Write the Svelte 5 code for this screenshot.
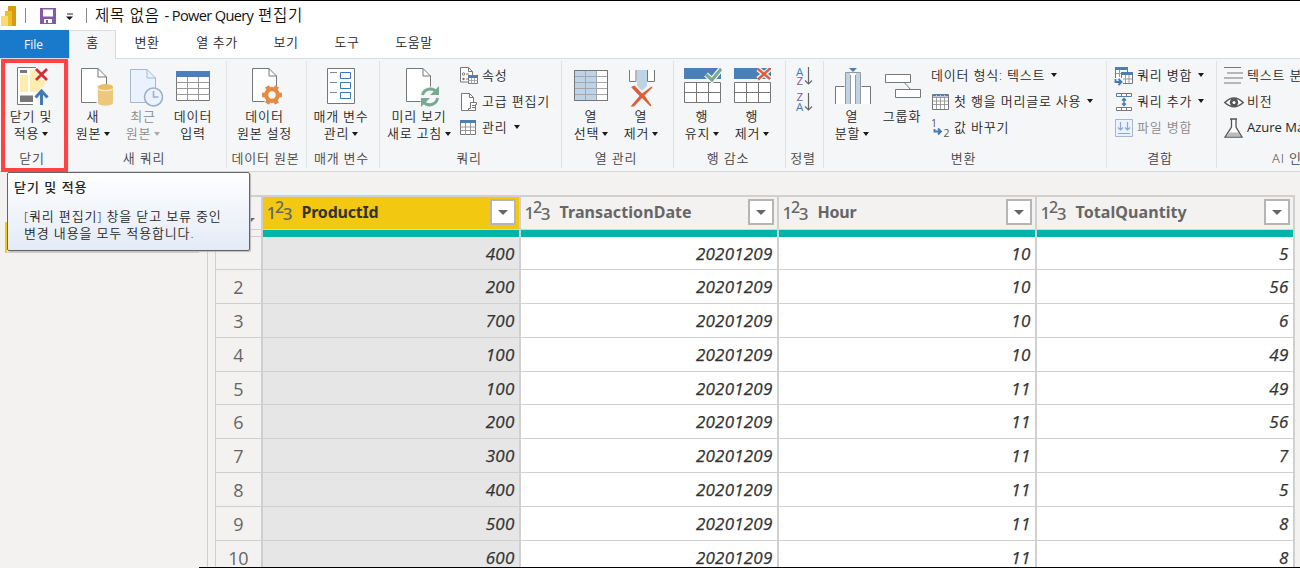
<script>
  const big = {
    apply: `<path d="M11.500 1.500H31V39H11.500Z" fill="#fff"/><path d="M30 1.500H11.500V38.500H27" fill="none" stroke="#777"/><path d="M14 9h8v17h-8zM24 4h8v7l-3 3h10v4l-8 8h-7z" fill="#ffedb0"/><path d="M14 4h7v3h-7zM14 29.500h13v6.500h-13z" fill="#777"/><path d="M30 3l11 11M41 3L30 14" stroke="#cf2f35" stroke-width="2.800"/><path d="M35.500 39V25M29.500 31.500l6-6.500 6 6.500" fill="none" stroke="#437ab5" stroke-width="3"/>`,
    source: `<path d="M13.500 2.500H30L38.500 11V36.500H13.500Z" fill="#fff" stroke="#777"/><path d="M30 2.500V11H38.500" fill="none" stroke="#777"/><path d="M28.500 19h18v22h-18z" fill="#f5f6f7"/><path d="M30 21v15.500c0 4.200 15 4.200 15 0V21" fill="#edc77c"/><ellipse cx="37.500" cy="20.800" rx="7.500" ry="2.800" fill="#e9bc69"/><path d="M30 22.500c1 3 14 3 15 0" fill="none" stroke="#fff" stroke-width=".8"/>`,
    recent: `<path d="M12.500 3.500H29L37.500 12V36.500H12.500Z" fill="#eaf2fd" stroke="#a9b6cf"/><path d="M29 3.500V12H37.500" fill="none" stroke="#a9b6cf"/><circle cx="35.500" cy="31" r="9" fill="#eaf2fd" stroke="#9dafcc" stroke-width="1.600"/><path d="M35.500 25v6h5" fill="none" stroke="#9dafcc" stroke-width="1.600"/>`,
    table: `<path d="M8.500 5.500h33v29h-33z" fill="#fff" stroke="#777"/><path d="M8 5h34v6H8z" fill="#4a7fb8"/><path d="M8.500 16.500h33M8.500 22.500h33M8.500 28.500h33M19.500 11v24M30.500 11v24" stroke="#999"/>`,
    settings: `<path d="M12.500 2.500H29L36.500 10V35.500H12.500Z" fill="#fff" stroke="#777"/><path d="M29 2.500V10H36.500" fill="none" stroke="#777"/><circle cx="32" cy="29" r="10" fill="#f5f6f7"/><circle cx="32" cy="29" r="5.800" fill="none" stroke="#e58a43" stroke-width="4.200"/><path d="M22 29h4M38 29h4M27 20.300l2 3.500M37 20.300l-2 3.500M27 37.700l2-3.500M37 37.700l-2-3.500" stroke="#e58a43" stroke-width="4.500"/>`,
    params: `<path d="M11.500 2.500h27v35h-27z" fill="#fff" stroke="#777"/><path d="M14 6.500h7M14 16.500h7M14 26.500h7" stroke="#888"/><path d="M24.500 6.500h10v6h-10zM24.500 16.500h10v6h-10zM24.500 26.500h10v6h-10z" fill="#fff" stroke="#3c78b7"/>`,
    refresh: `<path d="M12.500 2.500H29L36.500 10V35.500H12.500Z" fill="#fff" stroke="#777"/><path d="M29 2.500V10H36.500" fill="none" stroke="#777"/><circle cx="36" cy="31" r="10.500" fill="#f5f6f7"/><path d="M28.500 29a8 8 0 0 1 14-3M43.500 32a8 8 0 0 1-14 4" fill="none" stroke="#78aa91" stroke-width="3"/><path d="M45 20v9h-9zM27 41v-9h9z" fill="#78aa91"/>`,
    choose: `<path d="M8.500 4.500h33v30h-33z" fill="#fff" stroke="#777"/><path d="M9 5h22v29H9z" fill="#bfd3e8"/><path d="M9 10.500h32M9 16.500h32M9 22.500h32M9 28.500h32M19.500 5v29M30.500 5v29" stroke="#a3a7ac"/><path d="M8.500 4.500h33v30h-33z" fill="none" stroke="#777"/>`,
    remove: `<path d="M13.500 4v11.500h6.500V4M31.500 4v11.500h7V4" fill="#fff" stroke="#777"/><path d="M21 4h10v16l-5 5-5-5z" fill="#bfd3e8"/><path d="M15 21l3.500-1.500 7.500 8 9.500-7 1 1-8 8 7 10-1 1-8.500-8.500-8 8.500h-3.500l9-10.500z" fill="#d9603f"/>`,
    keep: `<path d="M7 2h37v11H7z" fill="#4a7fb8"/><path d="M7.500 16.500h36v20h-36z" fill="#fff" stroke="#777"/><path d="M7 26.500h37M19.500 17v20M31.500 17v20" stroke="#777"/><path d="M29 8.500l6 5.500 9-11" fill="none" stroke="#f5f6f7" stroke-width="5.500"/><path d="M29 8.500l6 5.500 9-11" fill="none" stroke="#78aa91" stroke-width="3.200"/>`,
    drop: `<path d="M7 2h37v11H7z" fill="#4a7fb8"/><path d="M7.500 16.500h36v20h-36z" fill="#fff" stroke="#777"/><path d="M7 26.500h37M19.500 17v20M31.500 17v20" stroke="#777"/><path d="M31 3l12 10M43 3L31 13" stroke="#f5f6f7" stroke-width="5"/><path d="M31 3l12 10M43 2.500L31 13.500" stroke="#d9603f" stroke-width="2.400"/>`,
    split: `<path d="M8.500 38V20.500h9M43.500 38V20.500h-9" fill="#fff" stroke="#777"/><path d="M9 21h9v17H9zM34 21h9v17h-9z" fill="#fff"/><path d="M18.500 38V6.500h15V38" fill="#fff" stroke="#999"/><path d="M19 7h4v31h-4zM29 7h4v31h-4z" fill="#bfd3e8"/><path d="M23.500 38V9M28.500 38V9" stroke="#999"/><path d="M20 0h12v6H20z" fill="#f5f6f7"/><path d="M22 2h8l-4 4z" fill="#4a7fb8"/>`,
    group: `<path d="M26 15l8 9" stroke="#777"/><path d="M8.500 8.500h25v8h-25zM18.500 23.500h25v8h-25z" fill="#fff" stroke="#777"/>`,
  };
  const small = {
    props: `<path d="M1.500 1.500h8l4 4V16h-12z" fill="#fff" stroke="#777"/><path d="M9.500 1.500v4h4" fill="none" stroke="#777"/><circle cx="4.500" cy="8" r="1.200" fill="none" stroke="#777"/><circle cx="4.500" cy="13" r="1.200" fill="#777"/><path d="M7 8h3M7 13h3" stroke="#777"/><path d="M9.500 9.500h9v8h-9z" fill="#fff" stroke="#777"/><path d="M9 9h10v3H9z" fill="#4a7fb8"/><path d="M9 14.500h10M12.500 12v6M15.500 12v6" stroke="#999" stroke-width=".8"/>`,
    editor: `<path d="M2.500 1.500h8l4 4v13h-12z" fill="#fff" stroke="#777"/><path d="M10.500 1.500v4h4" fill="none" stroke="#777"/><path d="M10 10h9v9h-9z" fill="#f5f6f7"/><path d="M11.500 10.500h6v2h-1v6h-7v-2h2z" fill="#fff" stroke="#777"/><path d="M13 13.500h3M13 15.500h3" stroke="#777"/>`,
    manage: `<path d="M1.500 2.500h15v14h-15z" fill="#fff" stroke="#777"/><path d="M1 2h16v3H1z" fill="#4a7fb8"/><path d="M1.500 9h15M1.500 12.500h15M6.500 5v12M11.500 5v12" stroke="#999"/>`,
    header: `<path d="M1.500 2.500h16v15h-16z" fill="#fff" stroke="#777"/><path d="M2 3h15v2H2z" fill="#b9cfe6"/><path d="M2 2h3v2H2zM6 2h3v2H6zM10 2h3v2h-3zM14 2h3v2h-3z" fill="#4a7fb8"/><path d="M1.500 5.500h16M1.500 9h16M1.500 12.500h16M5.500 5v12M9.500 5v12M13.500 5v12" stroke="#888" stroke-width=".8"/>`,
    replace: `<text x="0" y="9" font-family="Open Sans" font-size="10.500" fill="#555">1</text><text x="12.500" y="19" font-family="Open Sans" font-size="10.500" fill="#555">2</text><path d="M3.500 11v2.500h6M7 10.500l3 3-3 3" fill="none" stroke="#437ab5" stroke-width="1.800"/>`,
    merge: `<path d="M1.500 2.500h12v11h-12z" fill="#fff" stroke="#777"/><path d="M1 1h13v3H1z" fill="#4a7fb8"/><path d="M2 7.500h8M5.500 4v7" stroke="#999"/><path d="M7.500 7.500h11v10h-11z" fill="#fff" stroke="#777"/><path d="M7 6h12v3H7z" fill="#4a7fb8"/><path d="M8 13h10M11.500 9v8M15 9v8" stroke="#999"/><path d="M0 12h9v8H0z" fill="#f5f6f7"/><path d="M1.500 13v3h5M4.500 13l3 3-3 3" fill="none" stroke="#437ab5" stroke-width="1.800"/>`,
    append: `<path d="M2.500 1.500h15v3h-15z" fill="#fff" stroke="#4a7fb8"/><path d="M2.500 15.500h15v3h-15z" fill="#fff" stroke="#777"/><path d="M7.500 1v4M12.500 1v4M7.500 15v4M12.500 15v4" stroke="#777"/><path d="M10 8v4M8 8.500l2-2 2 2M8 11.500l2 2 2-2" fill="none" stroke="#437ab5" stroke-width="1.500"/>`,
    combine: `<path d="M1.500 1.500h17v17h-17z" fill="#eaf2fd" stroke="#a9b6cf"/><path d="M6.500 4v8M4 9.500l2.500 2.500 2.500-2.500M13.500 4v8M11 9.500l2.500 2.500 2.500-2.500M4 15.500h12" fill="none" stroke="#8ea6cb" stroke-width="1.200"/>`,
    text: `<path d="M0 1.500h17M3 7h16M0 12h19M0 17h17" stroke="#777" stroke-width="1.200"/>`,
    vision: `<path d="M.8 10.500Q10 1.500 19.200 10.500Q10 19 .8 10.500Z" fill="#fff" stroke="#555" stroke-width="1.500"/><circle cx="10" cy="10.500" r="4.200" fill="#555"/><circle cx="10" cy="10.500" r="1.500" fill="#fff"/>`,
    azure: `<path d="M6 1h7M7.500 1v8L1 19.200h17L12 9V1" fill="#fff" stroke="#555" stroke-width="1.300"/><path d="M5 14.500h9.500l2 3.500H3z" fill="#bbb"/>`,
  };
  const tabs = [
    ['변환', 62], ['열 추가', 78], ['보기', 60], ['도구', 62], ['도움말', 72],
  ];
  const groups = [
    { w: 68, label: '닫기', lw: 64, items: [{ i: 'apply', w: 62, a: '닫기 및', b: '적용', c: 1 }] },
    { w: 158, label: '새 쿼리', lw: 152, items: [{ i: 'source', w: 50, a: '새', b: '원본', c: 1 }, { i: 'recent', w: 50, a: '최근', b: '원본', c: 1, off: 1 }, { i: 'table', w: 50, a: '데이터', b: '입력' }] },
    { w: 80, label: '데이터 원본', lw: 79, items: [{ i: 'settings', w: 77, a: '데이터', b: '원본 설정' }] },
    { w: 73, label: '매개 변수', lw: 71, items: [{ i: 'params', w: 70, a: '매개 변수', b: '관리', c: 1 }] },
    { w: 182, label: '쿼리', lw: 180, items: [{ i: 'refresh', w: 80, a: '미리 보기', b: '새로 고침', c: 1 }], list: [['props', '속성'], ['editor', '고급 편집기'], ['manage', '관리', 1]] },
    { w: 112, label: '열 관리', lw: 110, pad: 5, items: [{ i: 'choose', w: 50, a: '열', b: '선택', c: 1 }, { i: 'remove', w: 50, a: '열', b: '제거', c: 1 }] },
    { w: 112, label: '행 감소', lw: 110, pad: 4, items: [{ i: 'keep', w: 50, a: '행', b: '유지', c: 1 }, { i: 'drop', w: 50, a: '행', b: '제거', c: 1 }] },
    { w: 38, label: '정렬', lw: 36, items: [], sort: true },
    { w: 283, label: '변환', lw: 281, pad: 4, items: [{ i: 'split', w: 50, a: '열', b: '분할', c: 1 }, { i: 'group', w: 50, a: '그룹화', b: '' }], lpad: 4, list: [['', '데이터 형식: 텍스트', 1], ['header', '첫 행을 머리글로 사용', 1], ['replace', '값 바꾸기']] },
    { w: 110, label: '결합', lw: 108, pad: 8, items: [], list: [['merge', '쿼리 병합', 1], ['append', '쿼리 추가', 1], ['combine', '파일 병합', 0, 1]] },
    { w: 170, label: 'AI 인사이트', lw: 180, pad: 8, items: [], list: [['text', '텍스트 분석'], ['vision', '비전'], ['azure', 'Azure Machine Learning']] },
  ];
  const columns = ['ProductId', 'TransactionDate', 'Hour', 'TotalQuantity'];
  const rows = [
    ['', 400, 20201209, 10, 5], [2, 200, 20201209, 10, 56], [3, 700, 20201209, 10, 6],
    [4, 100, 20201209, 10, 49], [5, 100, 20201209, 11, 49], [6, 200, 20201209, 11, 56],
    [7, 300, 20201209, 11, 7], [8, 400, 20201209, 11, 5], [9, 500, 20201209, 11, 8],
    [10, 600, 20201209, 11, 8],
  ];
</script>

<div class="app">
  <header class="title">
    <svg class="logo" width="18" height="22" viewBox="0 0 18 22"><path d="M8 1h8v20H8z" fill="#d99a10"/><path d="M5 6h7v15H5z" fill="#efbd2a"/><path d="M1 11h7v10H1z" fill="#f8dc72"/></svg>
    <i class="bar"></i>
    <svg class="save" width="17" height="17" viewBox="0 0 17 17"><path d="M0 0h16v16H0z" fill="#8559a8"/><path d="M3 1.500h10v7H3zM4 11h8v4H4z" fill="#fff"/><path d="M6 12h2v3H6z" fill="#8559a8"/></svg>
    <svg class="qat" width="8" height="8" viewBox="0 0 8 8"><path d="M1 1h6" stroke="#222"/><path d="M0 3.500h7l-3.500 3.500z" fill="#111"/></svg>
    <i class="bar"></i>
    <span class="name">제목 없음 <em>- Power Query</em> 편집기</span>
  </header>
  <nav>
    <b class="file">File</b><b class="home">홈</b>
    {#each tabs as [t, w]}<b style="width:{w}px">{t}</b>{/each}
  </nav>
  <section class="ribbon">
    {#each groups as g}
      <div class="group" style="width:{g.w}px">
        <div class="content" style="padding-left:{g.pad ?? 0}px">
          {#each g.items as it}
            <div class="big" class:off={it.off} style="width:{it.w}px">
              <svg width="50" height="42" viewBox="0 0 50 42">{@html big[it.i]}</svg>
              <span>{it.a}</span>
              <span>{it.b}{#if it.c}<i class="caret"></i>{/if}</span>
            </div>
          {/each}
          {#if g.sort}
            <svg class="sort" width="20" height="50" viewBox="0 0 20 50" font-family="Open Sans" font-size="11.500" font-weight="400">
              <text x="1" y="9.500" fill="#437ab5">A</text><text x="1.500" y="19" fill="#8559a8">Z</text>
              <text x="1.500" y="35" fill="#8559a8">Z</text><text x="1" y="45" fill="#437ab5">A</text>
              <path d="M13.500 1v17M10 14.500l3.500 3.500 3.500-3.500M13.500 27v17M10 40.500l3.500 3.500 3.500-3.500" fill="none" stroke="#666" stroke-width="1.200"/>
            </svg>
          {/if}
          {#if g.list}
            <div class="list" style="padding-left:{g.lpad ?? 0}px">
              {#each g.list as [icon, text, caret, off]}
                <div class="line" class:off class:latin={icon === 'azure'}>
                  {#if icon}<svg width="20" height="20" viewBox="0 0 20 20">{@html small[icon]}</svg>{/if}
                  <span>{text}</span>{#if caret}<i class="caret"></i>{/if}
                </div>
              {/each}
            </div>
          {/if}
        </div>
        <div class="label" style="width:{g.lw}px">{g.label}</div>
      </div>
    {/each}
  </section>
  <main>
    <aside><div class="query"></div></aside>
    <div class="grid">
      <div class="row head">
        <div class="num"><i class="caret"></i></div>
        {#each columns as c, n}
          <div class="th" class:sel={n === 0}>
            <span class="type">1<sup>2</sup><sub>3</sub></span><strong class:wide={n % 2}>{c}</strong><span class="drop"><i></i></span>
          </div>
        {/each}
      </div>
      <div class="row teal"><div class="num"></div>{#each columns as c}<div class="quality"></div>{/each}</div>
      {#each rows as r}
        <div class="row">
          <div class="num">{r[0]}</div>
          {#each r.slice(1) as v, n}<div class="td" class:sel={n === 0}>{v}</div>{/each}
        </div>
      {/each}
    </div>
  </main>
  <div class="mark"></div>
  <div class="tip"><h4>닫기 및 적용</h4><p>[쿼리 편집기] 창을 닫고 보류 중인<br>변경 내용을 모두 적용합니다.</p></div>
  <div class="edge"></div>
</div>

<style>
  .app { position: relative; width: 1300px; height: 568px; overflow: hidden; background: #f3f2f1; display: flex; flex-direction: column; box-sizing: border-box; border-top: 1px solid #000; font: 350 13px "Open Sans", "Noto Sans CJK KR", sans-serif; color: #262626; white-space: nowrap; }
  .app * { box-sizing: border-box; }
  i { display: block; }
  svg { overflow: visible; font-weight: 400; }
  .title { height: 29px; flex: none; background: #fff; display: flex; align-items: center; color: #111; font-size: 15.5px; }
  .name { margin-left: 8px; line-height: 27px; letter-spacing: .75px; }
  .name em { font-style: normal; font-weight: 400; font-size: 14.6px; letter-spacing: -.65px; }
  .logo { margin-top: 1px; }
  .bar { width: 1px; height: 15px; background: #888; margin-left: 7px; }
  .save { margin: 2px 9px 0 14px; }
  .qat { margin-top: 3px; }
  .qat + .bar { margin-left: 12px; }
  nav { height: 29px; flex: none; background: #fff; display: flex; border-bottom: 1px solid #dadbdc; letter-spacing: .6px; }
  nav b { font-weight: inherit; font-size: 13px; text-align: center; line-height: 25px; height: 28px; }
  nav .file { width: 69px; background: #1979ca; color: #fff; line-height: 29px; font-size: 12px; padding-right: 2px; letter-spacing: 0; font-weight: 400; }
  nav .home { width: 47px; height: 29px; background: #f5f6f7; border: 1px solid #dadbdc; border-bottom: 0; line-height: 23px; }
  .ribbon { height: 113px; flex: none; background: #f5f6f7; border-bottom: 1px solid #d5d6d7; display: flex; letter-spacing: .8px; }
  .group { flex: none; height: 107px; display: flex; flex-direction: column; box-shadow: 1px 0 #e1e2e3; margin-top: 2px; }
  .content { height: 87px; display: flex; padding-top: 5px; }
  .big { display: flex; flex-direction: column; align-items: center; }
  .big svg { flex: none; }
  .big span { height: 17px; line-height: 17px; display: flex; align-items: center; }
  .caret { width: 0; height: 0; border: 3.5px solid transparent; border-top: 4px solid #1a1a1a; border-bottom: 0; margin-left: 6px; }
  .big .caret { margin-left: 3px; }
  .off { color: #8a8a8a; }
  .off .caret { border-top-color: #aaa; }
  .list { display: flex; flex-direction: column; margin-top: -4px; }
  .line { height: 26px; display: flex; align-items: center; line-height: 20px; }
  .line.latin { letter-spacing: 0; font-weight: 400; }
  .line svg { margin-right: 3px; margin-top: 2px; }
  .sort { margin-left: 10px; }
  .label { text-align: center; line-height: 18px; height: 18px; margin-top: 1px; color: #444; }
  main { flex: 1; display: flex; min-height: 0; }
  aside { width: 208px; border-right: 1px solid #cfcfcf; padding: 50px 8px 0 5px; margin-right: 7px; }
  .query { height: 31px; border-left: 2px solid #f2c811; border-bottom: 1px solid #d0d0d0; }
  .grid { width: 1080px; margin-top: 23px; }
  .row { display: flex; height: 33.8px; }
  .head { height: 35px; border-top: 2px solid #d0d0d0; }
  .teal { height: 6.5px; }
  .num { width: 47.5px; border: solid #cfcfcf; border-width: 0 2px 1.5px 1px; text-align: center; font-size: 18px; font-weight: 400; line-height: 34px; color: #666; letter-spacing: -.3px; }
  .teal .num { border-bottom-width: 1px; }
  .head .num { padding: 21px 0 0 25px; }
  .head .num .caret { border-width: 4.5px 4.5px 0; border-top-color: #666; }
  .th { width: 258px; display: flex; align-items: center; border-right: 2px solid #d0d0d0; border-bottom: 1px solid #d8d4cc; padding: 0 3px 2px 4px; color: #666; }
  .th.sel { background: #f2c811; color: #333; }
  .type { font: 500 17px "Noto Sans", sans-serif; color: #666; letter-spacing: -1.3px; width: 35px; }
  .type sup { font-size: 16px; vertical-align: 6px; line-height: 0; }
  .type sub { font-size: 17px; vertical-align: -1px; line-height: 0; }
  .th strong { font: 700 16px "Noto Sans", sans-serif; letter-spacing: -.2px; flex: 1; }
  .th strong.wide { letter-spacing: .08px; }
  .drop { width: 26px; height: 26px; border: 2px solid #b5b5b5; background: #fff; display: grid; place-items: center; }
  .drop i { border: 5px solid transparent; border-top-color: #666; border-bottom: 0; }
  .quality { width: 258px; background: #00b5a8; border-right: 2px solid #d0d0d0; }
  .td { width: 258px; background: #fff; border: solid #d0d0d0; border-width: 0 2px 1.5px 0; text-align: right; padding-right: 4px; font: italic 500 17px/34px "Open Sans", sans-serif; letter-spacing: .2px; color: #333; -webkit-text-stroke: .25px #333; }
  .td.sel { background: #e6e6e6; }
  .mark { position: absolute; left: 1px; top: 58px; width: 67px; height: 113px; border: 4px solid #ff4343; }
  .tip { position: absolute; left: 7px; top: 171px; width: 243px; height: 79px; border: 1px solid #666; border-radius: 2px; background: linear-gradient(#fff, #e3eaf6); padding: 5px 6px; box-shadow: 1px 1px 1px #bbb; letter-spacing: .85px; }
  .tip h4 { margin: 0; font: 500 13px/18px "Open Sans", "Noto Sans CJK KR", sans-serif; letter-spacing: 1px; }
  .tip p { margin: 12px 0 0 10px; line-height: 17px; }
  .edge { position: absolute; left: 199px; right: 0; bottom: 0; height: 1px; background: #000; }
</style>
